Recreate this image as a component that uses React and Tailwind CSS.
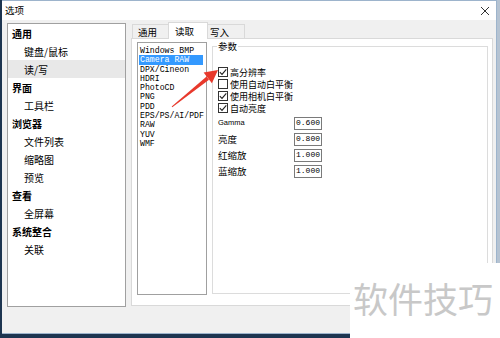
import React from "react";

const tree = [
  { label: "通用", bold: true },
  { label: "键盘/鼠标" },
  { label: "读/写", selected: true },
  { label: "界面", bold: true },
  { label: "工具栏" },
  { label: "浏览器", bold: true },
  { label: "文件列表" },
  { label: "缩略图" },
  { label: "预览" },
  { label: "查看", bold: true },
  { label: "全屏幕" },
  { label: "系统整合", bold: true },
  { label: "关联" },
];

const formats = [
  "Windows BMP",
  "Camera RAW",
  "DPX/Cineon",
  "HDRI",
  "PhotoCD",
  "PNG",
  "PDD",
  "EPS/PS/AI/PDF",
  "RAW",
  "YUV",
  "WMF",
];

const options = [
  { label: "高分辨率", checked: true },
  { label: "使用自动白平衡", checked: false },
  { label: "使用相机白平衡", checked: true },
  { label: "自动亮度", checked: true },
];

const params = [
  { label: "Gamma", value: "0.600", latin: true },
  { label: "亮度", value: "0.800" },
  { label: "红缩放", value: "1.000" },
  { label: "蓝缩放", value: "1.000" },
];

const Checkbox = ({ checked }) => (
  <div className="w-[10px] h-[10px] border border-[#333333] bg-white flex items-center justify-center shrink-0">
    {checked && (
      <svg width="8" height="8" viewBox="0 0 8 8">
        <path d="M0.8 4.2 L3 6.4 L7.3 1.3" fill="none" stroke="#222" strokeWidth="1.1" />
      </svg>
    )}
  </div>
);

export default function App() {
  return (
    <div className="relative flex w-[500px] h-[338px] overflow-hidden bg-[#1d3550] font-['Noto_Sans_CJK_SC',sans-serif] text-black">
      <div className="w-[2px] shrink-0" />

      <div className="flex flex-col w-[495px] h-[334px] shrink-0 bg-[#f0f0f0] border-t border-r border-b border-[#9db4cc]">
        {/* title bar */}
        <div className="flex items-center justify-between h-[19px] bg-white pl-[3px] pr-[6px]">
          <span className="text-[9.5px] leading-none">选项</span>
          <svg width="10" height="10" viewBox="0 0 10 10">
            <path d="M1 1 L9 9 M9 1 L1 9" stroke="#333" strokeWidth="1" />
          </svg>
        </div>

        <div className="flex flex-1 pl-[5px] pt-[2px]">
          {/* category tree */}
          <div className="mt-[1px] w-[119px] h-[284px] border border-[#a0a0a0] bg-white">
            {tree.map((item) => (
              <div
                key={item.label}
                className={`flex items-center h-[18px] text-[10px] ${item.bold ? "pl-[4px] font-bold" : "pl-[16px]"} ${item.selected ? "bg-[#e8e8e8]" : ""}`}
              >
                {item.label}
              </div>
            ))}
          </div>

          {/* tabs */}
          <div className="ml-[5px] w-[362px] flex flex-col">
            <div className="flex items-start h-[17px] pl-[1px] text-[9.5px]">
              <div className="mt-[2px] h-[15px] w-[36px] pl-[5px] border-t border-l border-[#d9d9d9] bg-[#f0f0f0] leading-[14px]">通用</div>
              <div className="relative z-10 h-[17px] w-[40px] pl-[6px] border-t border-l border-r border-[#d9d9d9] bg-white leading-[16px]">读取</div>
              <div className="mt-[2px] h-[15px] w-[37px] pl-[2px] border-t border-r border-[#d9d9d9] bg-[#f0f0f0] leading-[14px]">写入</div>
            </div>

            <div className="-mt-[1px] h-[268px] border border-[#d9d9d9] bg-white flex pl-[5px] pt-[3px]">
              {/* format list */}
              <div className="w-[70px] h-[253px] border border-[#a0a0a0] pt-[3px] px-[1px] font-['Liberation_Mono',monospace] text-[8.2px]">
                {formats.map((f, i) => (
                  <div
                    key={f}
                    className={`h-[9.3px] leading-[9.3px] pl-[1px] whitespace-nowrap ${i === 1 ? "bg-[#3399ff] text-white mr-[2px]" : ""}`}
                  >
                    {f}
                  </div>
                ))}
              </div>

              {/* parameters group */}
              <div className="relative ml-[5px] mt-[4px] w-[276px] h-[248px] border border-[#dcdcdc] pl-[5px] pt-[19px]">
                <span className="absolute -top-[7px] left-[4px] bg-white px-[1px] text-[9.5px] leading-[12px]">参数</span>

                {options.map((o) => (
                  <div key={o.label} className="flex items-center gap-[2px] h-[12px]">
                    <Checkbox checked={o.checked} />
                    <span className="text-[9px] leading-[11px]">{o.label}</span>
                  </div>
                ))}

                <div className="mt-[1px]">
                  {params.map((p) => (
                    <div key={p.label} className="flex items-center h-[16px]">
                      <span
                        className={`w-[76px] ${p.latin ? "font-['Liberation_Sans',sans-serif] text-[7.5px]" : "text-[9.5px]"}`}
                      >
                        {p.label}
                      </span>
                      <div className="w-[28px] h-[13px] border border-[#7a7a7a] flex items-center justify-center font-['Liberation_Mono',monospace] text-[8px]">
                        {p.value}
                      </div>
                    </div>
                  ))}
                </div>
              </div>
            </div>
          </div>
        </div>
      </div>

      <div className="w-[3px] bg-[#b5c3d2]" />

      {/* annotation arrow */}
      <svg className="absolute inset-0 pointer-events-none" width="500" height="338" viewBox="0 0 500 338">
        <polygon points="171.7,106.4 172.3,107.2 209,79.7 206.6,76.6" fill="#e8392c" />
        <polygon points="218,70 211.9,83.3 203.6,72.6" fill="#e8392c" />
      </svg>

      {/* watermark */}
      <div className="absolute right-0 bottom-0 w-[150px] h-[75px] bg-white pl-[3px] pt-[17px]">
        <span className="text-[35px] leading-[35px] text-[#c8c8c8] whitespace-nowrap">软件技巧</span>
      </div>
    </div>
  );
}
